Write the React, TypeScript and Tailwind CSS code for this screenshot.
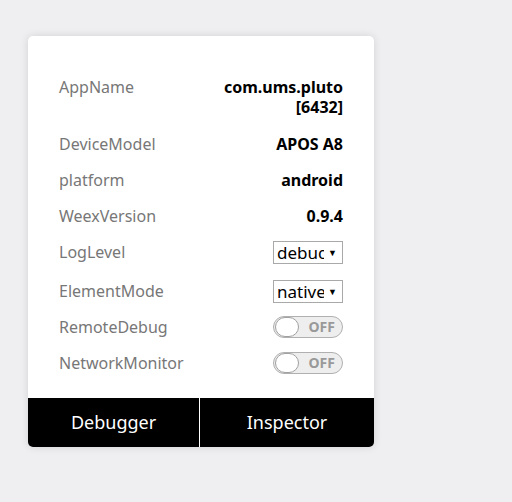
import React from "react";

const font = { fontFamily: '"Noto Sans", "Open Sans", sans-serif' };

function Select({ value }: { value: string }) {
  return (
    <div className="flex h-[23px] w-[70px] items-center border border-[#a9a9a9] bg-white pl-[3px] pr-[5px] text-[17px] leading-none text-black">
      <span className="w-[47px] shrink-0 overflow-hidden whitespace-nowrap">{value}</span>
      <span className="ml-auto text-[9px]">▼</span>
    </div>
  );
}

function Toggle() {
  return (
    <div className="relative flex h-[22px] w-[70px] items-center rounded-full border border-[#b0b0b0] bg-[#eeeeee]">
      <div className="absolute left-[1px] top-[0px] h-[20px] w-[24px] rounded-full border border-[#a0a0a0] bg-white" />
      <span className="ml-auto pr-[7px] text-[14px] font-bold leading-none text-[#999]">OFF</span>
    </div>
  );
}

function Row({ label, children, className = "" }: { label: string; children: React.ReactNode; className?: string }) {
  return (
    <div className={`flex h-[36px] items-center justify-between ${className}`}>
      <span className="text-[16px] text-[#777]">{label}</span>
      {children}
    </div>
  );
}

export default function App() {
  return (
    <div className="min-h-[502px] w-full bg-[#efeff1] pl-[28px] pt-[36px]" style={font}>
      <div className="w-[346px] overflow-hidden rounded-[5px] bg-white shadow-[0_0_8px_rgba(0,0,0,0.12)]">
        <div className="px-[31px] pt-[41px] pb-[17px]">
          {/* app name wraps on two lines */}
          <div className="flex h-[49px] items-start justify-between">
            <span className="text-[16px] leading-[20px] text-[#777]">AppName</span>
            <span className="text-right text-[16px] font-bold leading-[20px] text-black">
              com.ums.pluto
              <br />
              [6432]
            </span>
          </div>
          <Row label="DeviceModel">
            <span className="text-[16px] font-bold text-black">APOS A8</span>
          </Row>
          <Row label="platform">
            <span className="text-[16px] font-bold text-black">android</span>
          </Row>
          <Row label="WeexVersion">
            <span className="text-[16px] font-bold text-black">0.9.4</span>
          </Row>
          <Row label="LogLevel">
            <Select value="debug" />
          </Row>
          <Row label="ElementMode" className="mt-[3px]">
            <Select value="native" />
          </Row>
          <Row label="RemoteDebug">
            <Toggle />
          </Row>
          <Row label="NetworkMonitor">
            <Toggle />
          </Row>
        </div>
        <div className="flex h-[49px] bg-black text-[18px] text-white">
          <div className="flex w-[172px] items-center justify-center border-r border-white">Debugger</div>
          <div className="flex flex-1 items-center justify-center">Inspector</div>
        </div>
      </div>
    </div>
  );
}
